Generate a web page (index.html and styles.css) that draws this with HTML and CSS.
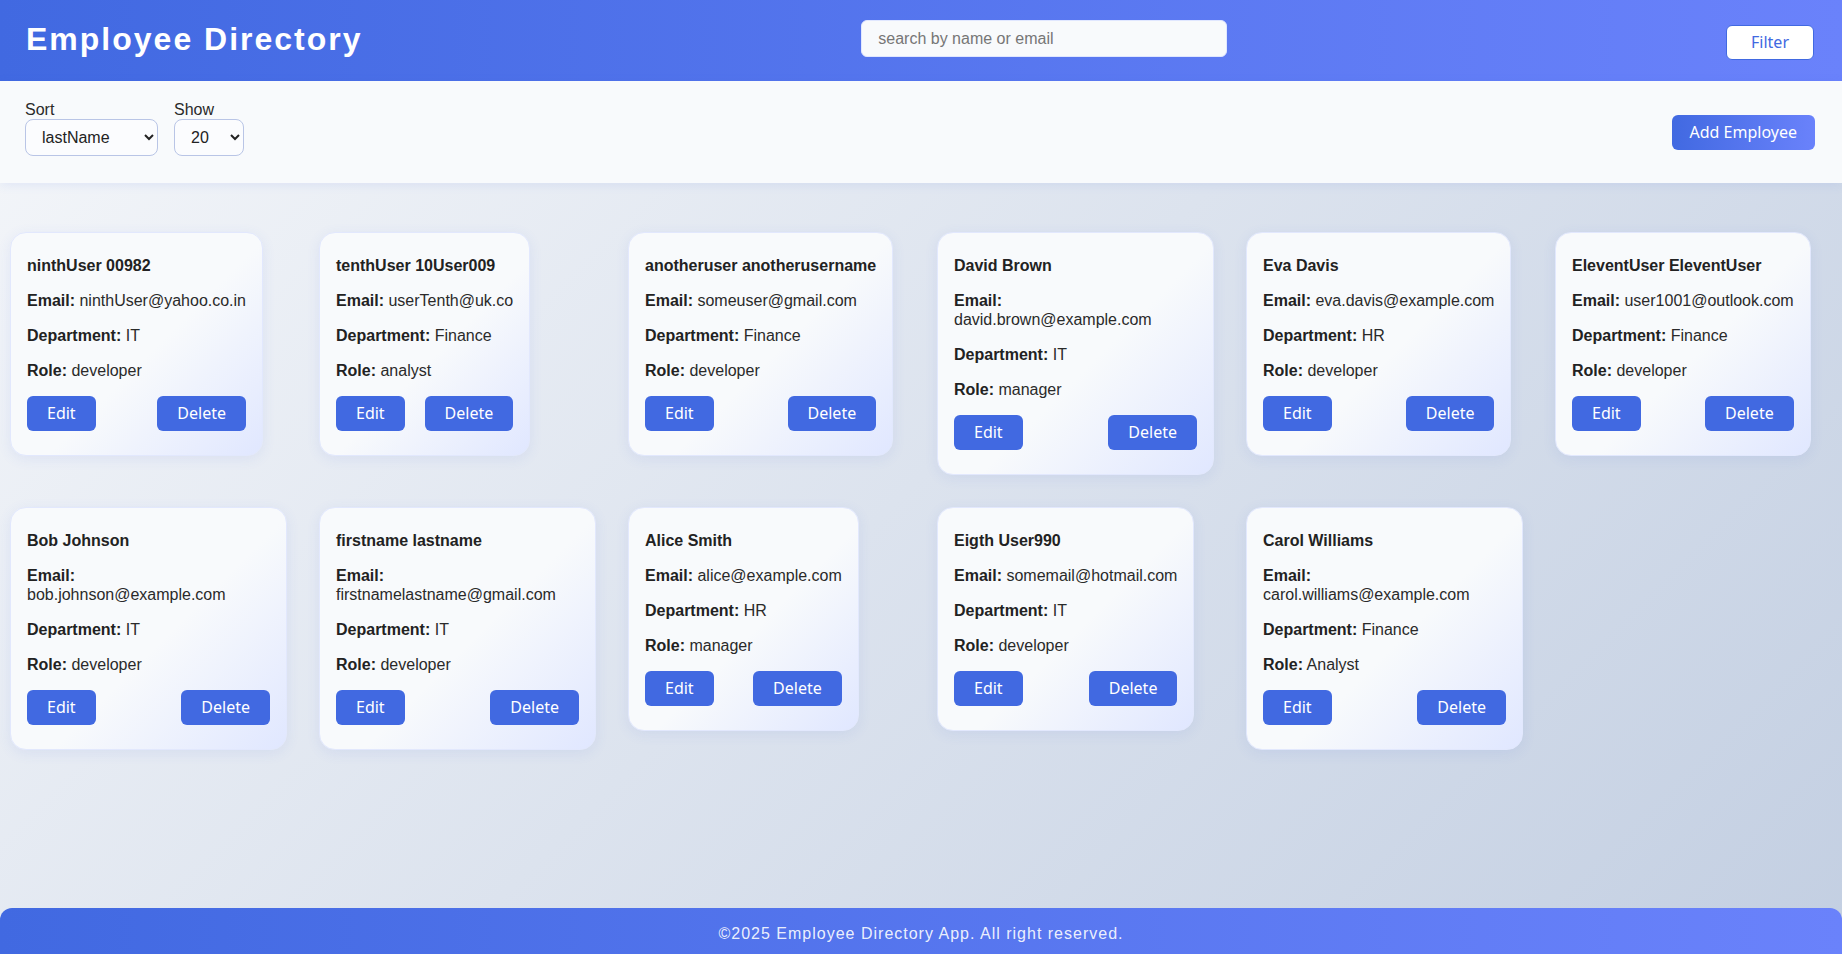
FILE: index.html
```html
<!DOCTYPE html>
<html lang="en">
<head>
<meta charset="utf-8">
<title>Employee Directory</title>
<link rel="stylesheet" href="styles.css">
</head>
<body>
<header class="app-header">
  <h1 class="app-title">Employee Directory</h1>
  <input class="search-input" type="text" placeholder="search by name or email">
  <button class="filter-btn" type="button">Filter</button>
</header>

<section class="toolbar">
  <div class="controls">
    <div class="control">
      <label class="control-label" for="sort">Sort</label>
      <select id="sort" class="select select-sort">
        <option>firstName</option>
        <option selected>lastName</option>
        <option>department</option>
      </select>
    </div>
    <div class="control">
      <label class="control-label" for="show">Show</label>
      <select id="show" class="select select-show">
        <option>10</option>
        <option selected>20</option>
        <option>50</option>
      </select>
    </div>
  </div>
  <button class="add-btn" type="button">Add Employee</button>
</section>

<main class="directory">
  <div class="card">
    <h3 class="card-name">ninthUser 00982</h3>
    <p class="card-line"><strong>Email:</strong> ninthUser@yahoo.co.in</p>
    <p class="card-line"><strong>Department:</strong> IT</p>
    <p class="card-line"><strong>Role:</strong> developer</p>
    <div class="card-actions"><button class="btn" type="button">Edit</button><button class="btn" type="button">Delete</button></div>
  </div>
  <div class="card">
    <h3 class="card-name">tenthUser 10User009</h3>
    <p class="card-line"><strong>Email:</strong> userTenth@uk.co</p>
    <p class="card-line"><strong>Department:</strong> Finance</p>
    <p class="card-line"><strong>Role:</strong> analyst</p>
    <div class="card-actions"><button class="btn" type="button">Edit</button><button class="btn" type="button">Delete</button></div>
  </div>
  <div class="card">
    <h3 class="card-name">anotheruser anotherusername</h3>
    <p class="card-line"><strong>Email:</strong> someuser@gmail.com</p>
    <p class="card-line"><strong>Department:</strong> Finance</p>
    <p class="card-line"><strong>Role:</strong> developer</p>
    <div class="card-actions"><button class="btn" type="button">Edit</button><button class="btn" type="button">Delete</button></div>
  </div>
  <div class="card">
    <h3 class="card-name">David Brown</h3>
    <p class="card-line"><strong>Email:</strong> david.brown@example.com</p>
    <p class="card-line"><strong>Department:</strong> IT</p>
    <p class="card-line"><strong>Role:</strong> manager</p>
    <div class="card-actions"><button class="btn" type="button">Edit</button><button class="btn" type="button">Delete</button></div>
  </div>
  <div class="card">
    <h3 class="card-name">Eva Davis</h3>
    <p class="card-line"><strong>Email:</strong> eva.davis@example.com</p>
    <p class="card-line"><strong>Department:</strong> HR</p>
    <p class="card-line"><strong>Role:</strong> developer</p>
    <div class="card-actions"><button class="btn" type="button">Edit</button><button class="btn" type="button">Delete</button></div>
  </div>
  <div class="card">
    <h3 class="card-name">EleventUser EleventUser</h3>
    <p class="card-line"><strong>Email:</strong> user1001@outlook.com</p>
    <p class="card-line"><strong>Department:</strong> Finance</p>
    <p class="card-line"><strong>Role:</strong> developer</p>
    <div class="card-actions"><button class="btn" type="button">Edit</button><button class="btn" type="button">Delete</button></div>
  </div>
  <div class="card">
    <h3 class="card-name">Bob Johnson</h3>
    <p class="card-line"><strong>Email:</strong> bob.johnson@example.com</p>
    <p class="card-line"><strong>Department:</strong> IT</p>
    <p class="card-line"><strong>Role:</strong> developer</p>
    <div class="card-actions"><button class="btn" type="button">Edit</button><button class="btn" type="button">Delete</button></div>
  </div>
  <div class="card">
    <h3 class="card-name">firstname lastname</h3>
    <p class="card-line"><strong>Email:</strong> firstnamelastname@gmail.com</p>
    <p class="card-line"><strong>Department:</strong> IT</p>
    <p class="card-line"><strong>Role:</strong> developer</p>
    <div class="card-actions"><button class="btn" type="button">Edit</button><button class="btn" type="button">Delete</button></div>
  </div>
  <div class="card">
    <h3 class="card-name">Alice Smith</h3>
    <p class="card-line"><strong>Email:</strong> alice@example.com</p>
    <p class="card-line"><strong>Department:</strong> HR</p>
    <p class="card-line"><strong>Role:</strong> manager</p>
    <div class="card-actions"><button class="btn" type="button">Edit</button><button class="btn" type="button">Delete</button></div>
  </div>
  <div class="card">
    <h3 class="card-name">Eigth User990</h3>
    <p class="card-line"><strong>Email:</strong> somemail@hotmail.com</p>
    <p class="card-line"><strong>Department:</strong> IT</p>
    <p class="card-line"><strong>Role:</strong> developer</p>
    <div class="card-actions"><button class="btn" type="button">Edit</button><button class="btn" type="button">Delete</button></div>
  </div>
  <div class="card">
    <h3 class="card-name">Carol Williams</h3>
    <p class="card-line"><strong>Email:</strong> carol.williams@example.com</p>
    <p class="card-line"><strong>Department:</strong> Finance</p>
    <p class="card-line"><strong>Role:</strong> Analyst</p>
    <div class="card-actions"><button class="btn" type="button">Edit</button><button class="btn" type="button">Delete</button></div>
  </div>
</main>

<footer class="app-footer">©2025 Employee Directory App. All right reserved.</footer>
</body>
</html>
```

FILE: styles.css
```css
html, body {
  margin: 0;
  padding: 0;
}

body {
  min-height: 100vh;
  display: flex;
  flex-direction: column;
  font-family: "Liberation Sans", Arial, sans-serif;
  font-size: 16px;
  color: #2a2a2a;
  background: linear-gradient(135deg, #f5f7fa 0%, #c3cfe2 100%);
}

/* ---------- header ---------- */
.app-header {
  display: flex;
  justify-content: space-between;
  align-items: center;
  height: 81px;
  box-sizing: border-box;
  padding: 0 28px 0 26px;
  background: linear-gradient(90deg, #4169e1 0%, #6a82fb 100%);
}

.app-title {
  margin: 0 0 2px;
  font-size: 32px;
  font-weight: bold;
  letter-spacing: 2px;
  color: #ffffff;
}

.search-input {
  width: 366px;
  box-sizing: border-box;
  margin-bottom: 4px;
  padding: 8px 16px;
  border: 1px solid #e0e7ff;
  border-radius: 6px;
  background: #f8fafc;
  font-family: "Liberation Sans", Arial, sans-serif;
  font-size: 16px;
  line-height: 19px;
  color: #222;
  outline: none;
}

.search-input::placeholder {
  color: #767676;
}

.filter-btn {
  margin-top: 4px;
  padding: 7px 24px;
  border: 1px solid #4169e1;
  border-radius: 6px;
  background: #ffffff;
  color: #4169e1;
  font-family: "Noto Sans", "Open Sans", sans-serif;
  font-size: 16px;
  line-height: 19px;
  cursor: pointer;
}

/* ---------- toolbar ---------- */
.toolbar {
  display: flex;
  justify-content: space-between;
  align-items: center;
  padding: 20px 27px 27px 25px;
  background: #f8fafc;
  box-shadow: 0 2px 10px rgba(65, 105, 225, 0.10);
}

.controls {
  display: flex;
  gap: 16px;
}

.control {
  display: flex;
  flex-direction: column;
}

.control-label {
  font-size: 16px;
  line-height: 18px;
  color: #2a2a2a;
}

.select {
  box-sizing: border-box;
  height: 37px;
  padding: 0 8px 0 12px;
  border: 1px solid #b9c5e6;
  border-radius: 8px;
  background-color: #fbfcfe;
  font-family: "Liberation Sans", Arial, sans-serif;
  font-size: 16px;
  color: #222;
}

.select-sort {
  width: 133px;
}

.select-show {
  width: 70px;
}

.add-btn {
  margin-top: 8px;
  padding: 8px 18px;
  border: none;
  border-radius: 6px;
  background: linear-gradient(90deg, #4169e1 0%, #6a82fb 100%);
  color: #ffffff;
  font-family: "Noto Sans", "Open Sans", sans-serif;
  font-size: 16px;
  line-height: 19px;
  cursor: pointer;
}

/* ---------- cards ---------- */
.directory {
  flex: 1;
  display: grid;
  grid-template-columns: repeat(auto-fill, minmax(250px, 1fr));
  column-gap: 32px;
  row-gap: 32px;
  align-items: start;
  justify-items: start;
  align-content: start;
  padding: 49px 10px 40px;
}

.card {
  max-width: 100%;
  box-sizing: border-box;
  padding: 23px 16px 24px;
  border: 1px solid #e2e8fd;
  border-radius: 16px;
  background: linear-gradient(135deg, #f8fafc 55%, #e0e7ff 100%);
  box-shadow: 0 3px 14px rgba(65, 105, 225, 0.09);
}

.card-name {
  margin: 0 0 16px;
  font-size: 16px;
  font-weight: bold;
  line-height: 19px;
  color: #222;
}

.card-line {
  margin: 0 0 16px;
  line-height: 19px;
  color: #2a2a2a;
}

.card-line strong {
  color: #222;
}

.card-actions {
  display: flex;
  justify-content: space-between;
  gap: 16px;
}

.btn {
  padding: 8px 20px;
  border: none;
  border-radius: 6px;
  background: #4169e1;
  color: #ffffff;
  font-family: "Noto Sans", "Open Sans", sans-serif;
  font-size: 16px;
  line-height: 19px;
  cursor: pointer;
}

/* ---------- footer ---------- */
.app-footer {
  padding: 17px 0 11px;
  border-radius: 12px 12px 0 0;
  background: linear-gradient(90deg, #4169e1 0%, #6a82fb 100%);
  color: rgba(255, 255, 255, 0.9);
  text-align: center;
  font-size: 16px;
  line-height: 18px;
  letter-spacing: 1px;
}
```
